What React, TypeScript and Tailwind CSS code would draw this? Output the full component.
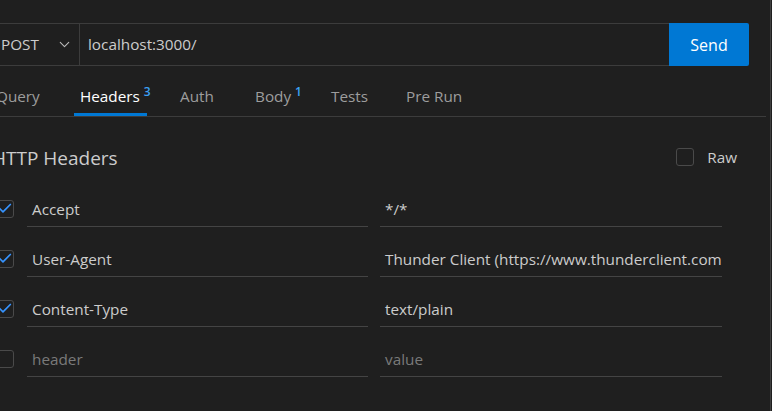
import { ChevronDown, Check } from "lucide-react";

interface HeaderRow {
    key: string;
    value: string;
    checked: boolean;
    placeholder?: boolean;
}

const rows: HeaderRow[] = [
    { key: "Accept", value: "*/*", checked: true },
    { key: "User-Agent", value: "Thunder Client (https://www.thunderclient.com)", checked: true },
    { key: "Content-Type", value: "text/plain", checked: true },
    { key: "header", value: "value", checked: false, placeholder: true },
];

function Checkbox(props: { checked: boolean }) {
    return (
        <div className="flex h-[18px] w-[18px] shrink-0 items-center justify-center rounded-[3px] border border-[#4a4a4a]">
            {props.checked && <Check size={17} strokeWidth={2.5} className="text-[#3794ff]" />}
        </div>
    );
}

export default function App() {
    const font = { fontFamily: '"Open Sans", "Noto Sans", sans-serif' };

    return (
        <div className="flex h-[411px] w-[772px] overflow-hidden bg-[#1f1f1f] text-[#cccccc]" style={font}>
            <div className="-ml-[10px] flex min-w-0 flex-1 flex-col">
                {/* url bar */}
                <div className="mt-[23px] flex h-[43px] pr-[21px]">
                    <div className="flex flex-1 border border-r-0 border-[#3c3c3c]">
                        <div className="flex w-[89px] items-center justify-between border-r border-[#3c3c3c] pl-[10px] pr-[6px] text-[15.3px] text-[#cccccc]">
                            <span>POST</span>
                            <ChevronDown size={17} strokeWidth={1.5} className="text-[#bbbbbb]" />
                        </div>
                        <div className="flex items-center pl-[8px] text-[15.3px] text-[#cccccc]">localhost:3000/</div>
                    </div>
                    <button className="flex w-[80px] items-center justify-center rounded-r-[2px] bg-[#0078d4] text-[16px] text-white">
                        Send
                    </button>
                </div>

                {/* tabs */}
                <div className="mr-[4px] flex h-[51px] items-end border-b border-[#3c3c3c] text-[15.3px] text-[#9d9d9d]">
                    <div className="w-[84px]">
                        <span className="block px-[6px] pb-[8px]">Query</span>
                    </div>
                    <div className="w-[100px]">
                        <span className="inline-block border-b-[3px] border-[#0078d4] pl-[6px] pb-[5px] text-white">
                            Headers
                            <sup className="-mr-[4px] ml-[4px] text-[12px] font-semibold text-[#3ba1f5]">3</sup>
                        </span>
                    </div>
                    <div className="w-[75px]">
                        <span className="block px-[6px] pb-[8px]">Auth</span>
                    </div>
                    <div className="w-[76px]">
                        <span className="block px-[6px] pb-[8px]">
                            Body<sup className="ml-[4px] text-[12px] font-semibold text-[#3ba1f5]">1</sup>
                        </span>
                    </div>
                    <div className="w-[75px]">
                        <span className="block px-[6px] pb-[8px]">Tests</span>
                    </div>
                    <div>
                        <span className="block px-[6px] pb-[8px]">Pre Run</span>
                    </div>
                </div>

                {/* headers section */}
                <div className="flex items-center justify-between pr-[33px] pt-[28px]">
                    <div className="pl-[2px] text-[19px] leading-[26px] text-[#cccccc]">HTTP Headers</div>
                    <div className="-mt-[2px] flex items-center gap-[13px] text-[15.3px]">
                        <Checkbox checked={false} />
                        <span>Raw</span>
                    </div>
                </div>

                <div className="mt-[21px] flex flex-col gap-[15px] pl-[6px]">
                    {rows.map((row, index) => (
                        <div className="flex items-center" key={index}>
                            <div className="-mt-[2px]">
                                <Checkbox checked={row.checked} />
                            </div>
                            <div
                                className={
                                    "ml-[13px] flex h-[35px] w-[341px] items-center border-b border-[#444444] pl-[5px] text-[15.3px] " +
                                    (row.placeholder ? "text-[#7a7a7a]" : "text-[#cccccc]")
                                }
                            >
                                {row.key}
                            </div>
                            <div
                                className={
                                    "ml-[12px] flex h-[35px] w-[342px] items-center overflow-hidden whitespace-nowrap border-b border-[#444444] pl-[5px] text-[15.3px] " +
                                    (row.placeholder ? "text-[#7a7a7a]" : "text-[#cccccc]")
                                }
                            >
                                {row.value}
                            </div>
                        </div>
                    ))}
                </div>
            </div>
            <div className="w-[1px] bg-[#404040]" />
            <div className="w-[1px] bg-[#1f1f1f]" />
        </div>
    );
}
